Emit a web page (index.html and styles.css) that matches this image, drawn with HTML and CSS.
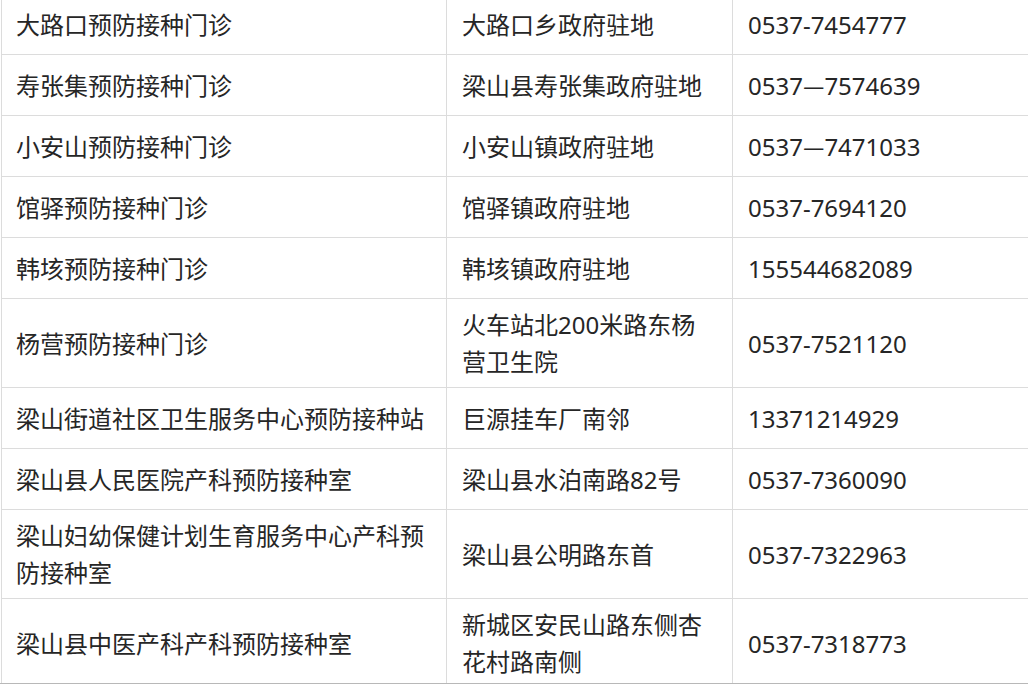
FILE: index.html
```html
<!DOCTYPE html>
<html lang="zh-CN">
<head>
<meta charset="utf-8">
<title>预防接种门诊</title>
<link rel="stylesheet" href="styles.css">
</head>
<body>
<div class="frame">
<table class="clinics">
<colgroup>
<col class="c-name">
<col class="c-addr">
<col class="c-tel">
</colgroup>
<tbody>
<tr><td>大路口预防接种门诊</td><td>大路口乡政府驻地</td><td>0537-7454777</td></tr>
<tr><td>寿张集预防接种门诊</td><td>梁山县寿张集政府驻地</td><td>0537<span class="dash">—</span>7574639</td></tr>
<tr><td>小安山预防接种门诊</td><td>小安山镇政府驻地</td><td>0537<span class="dash">—</span>7471033</td></tr>
<tr><td>馆驿预防接种门诊</td><td>馆驿镇政府驻地</td><td>0537-7694120</td></tr>
<tr><td>韩垓预防接种门诊</td><td>韩垓镇政府驻地</td><td>155544682089</td></tr>
<tr><td>杨营预防接种门诊</td><td>火车站北200米路东杨营卫生院</td><td>0537-7521120</td></tr>
<tr><td>梁山街道社区卫生服务中心预防接种站</td><td>巨源挂车厂南邻</td><td>13371214929</td></tr>
<tr><td>梁山县人民医院产科预防接种室</td><td>梁山县水泊南路82号</td><td>0537-7360090</td></tr>
<tr><td>梁山妇幼保健计划生育服务中心产科预防接种室</td><td>梁山县公明路东首</td><td>0537-7322963</td></tr>
<tr><td>梁山县中医产科产科预防接种室</td><td>新城区安民山路东侧杏花村路南侧</td><td>0537-7318773</td></tr>
</tbody>
</table>
</div>
</body>
</html>
```

FILE: styles.css
```css
html, body {
  margin: 0;
  padding: 0;
  background: #ffffff;
}

.frame {
  height: 684px;
  overflow: hidden;
  box-sizing: border-box;
  border-bottom: 1px solid #b8b8b8;
  padding-left: 1px;
}

.clinics {
  border-collapse: collapse;
  table-layout: fixed;
  width: 1027px;
  margin-top: -7px;
  font-family: "Noto Sans", "Noto Sans CJK SC", sans-serif;
  font-size: 24px;
  line-height: 37px;
  color: #262626;
}

.c-name { width: 445px; }
.c-addr { width: 286px; }
.c-tel { width: 296px; }

.clinics td {
  border: 1px solid #dcdcdc;
  padding: 7px 15px 7px 14px;
  height: 46px;
  vertical-align: middle;
  text-align: left;
}

.clinics td + td {
  padding-left: 15px;
}

.dash {
  font-family: "Noto Sans CJK SC", sans-serif;
}
```
